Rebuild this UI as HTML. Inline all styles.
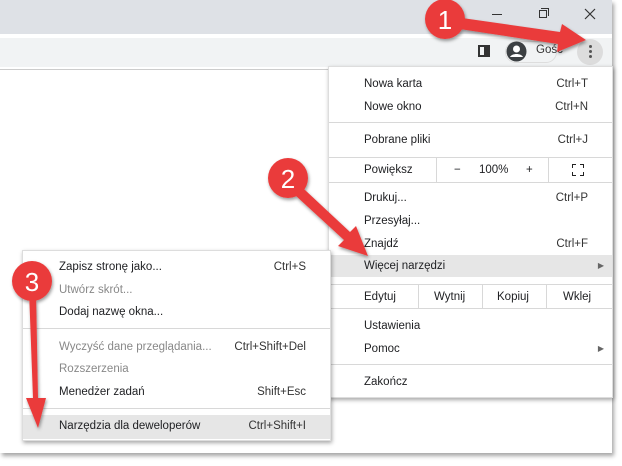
<!DOCTYPE html>
<html><head><meta charset="utf-8"><style>
*{margin:0;padding:0;box-sizing:border-box}
body{width:622px;height:466px;background:#fff;position:relative;overflow:hidden;font-family:"Liberation Sans",sans-serif;font-size:11.5px;color:#202124}
.abs{position:absolute}
.menu{position:absolute;background:#fff;box-shadow:1px 2px 4px rgba(0,0,0,.35);border:1px solid #ddd}
.it{position:absolute;left:0;right:0;height:22px;line-height:22px}
.it .l{position:absolute}
.it .r{position:absolute;color:#333}
.dis{color:#888}
.sep{position:absolute;left:0;right:0;height:1px;background:#d8d8d8}
.hl{background:#e6e6e6}
</style></head><body>
<div class="abs" style="left:0;top:0;width:612px;height:453px;box-shadow:2px 3px 4px rgba(0,0,0,.35);background:#fff"></div>
<div class="abs" style="left:0;top:0;width:612px;height:34px;background:#dee1e6"></div>
<div class="abs" style="left:0;top:38px;width:612px;height:29px;background:#f1f3f4"></div>
<div class="abs" style="left:0;top:69px;width:328px;height:1px;background:#ccc"></div>
<div class="abs" style="left:492px;top:14px;width:10px;height:1px;background:#333"></div>
<div class="abs" style="left:539px;top:10px;width:8px;height:8px;border:1px solid #333"></div>
<div class="abs" style="left:541px;top:8px;width:8px;height:8px;border-top:1px solid #333;border-right:1px solid #333"></div>
<svg class="abs" style="left:584px;top:8px" width="12" height="12"><path d="M1 1L11 11M11 1L1 11" stroke="#333" stroke-width="1.2"/></svg>
<div class="abs" style="left:478px;top:45px;width:12px;height:12px;border:2px solid #333;border-right-width:6px"></div>
<div class="abs" style="left:505px;top:41px;width:52px;height:22px;border-radius:11px;border:1px solid #ddd;background:#f1f3f4"></div>
<svg class="abs" style="left:506px;top:41px" width="21" height="21"><circle cx="10.5" cy="10.5" r="10" fill="#3c4043"/><circle cx="10.5" cy="8" r="3.5" fill="#fff"/><path d="M4 16c2-4 11-4 13 0" fill="#fff"/></svg>
<div class="abs" style="left:536px;top:44px;color:#333">Gość</div>
<div class="abs" style="left:577px;top:39px;width:26px;height:26px;border-radius:13px;background:#dcdcdc"></div>
<div class="abs" style="left:589px;top:45px;width:3px;height:3px;border-radius:2px;background:#555;box-shadow:0 5px 0 #555,0 10px 0 #555"></div>
<div class="menu" style="left:328px;top:66px;width:285px;height:332px">
 <div class="it" style="top:6px"><span class="l" style="left:35px">Nowa karta</span><span class="r" style="right:24px">Ctrl+T</span></div>
 <div class="it" style="top:29px"><span class="l" style="left:35px">Nowe okno</span><span class="r" style="right:24px">Ctrl+N</span></div>
 <div class="sep" style="top:55px"></div>
 <div class="it" style="top:62px"><span class="l" style="left:35px">Pobrane pliki</span><span class="r" style="right:24px">Ctrl+J</span></div>
 <div class="sep" style="top:90px"></div>
 <div class="it" style="top:92px"><span class="l" style="left:35px">Powiększ</span><span class="l" style="left:125px">−</span><span class="l" style="left:150px">100%</span><span class="l" style="left:197px">+</span></div>
 <div class="abs" style="left:107px;top:90px;width:1px;height:25px;background:#d8d8d8"></div>
 <div class="abs" style="left:219px;top:90px;width:1px;height:25px;background:#d8d8d8"></div>
 <svg class="abs" style="left:243px;top:97px" width="12" height="12"><path d="M0 4V0H4M8 0H12V4M12 8V12H8M4 12H0V8" fill="none" stroke="#222" stroke-width="2"/></svg>
 <div class="sep" style="top:115px"></div>
 <div class="it" style="top:120px"><span class="l" style="left:35px">Drukuj...</span><span class="r" style="right:24px">Ctrl+P</span></div>
 <div class="it" style="top:143px"><span class="l" style="left:35px">Przesyłaj...</span></div>
 <div class="it" style="top:166px"><span class="l" style="left:35px">Znajdź</span><span class="r" style="right:24px">Ctrl+F</span></div>
 <div class="it hl" style="top:188px"><span class="l" style="left:35px">Więcej narzędzi</span><span class="r" style="right:8px;font-size:8px;color:#666">▶</span></div>
 <div class="sep" style="top:217px"></div>
 <div class="it" style="top:219px"><span class="l" style="left:35px">Edytuj</span><span class="l" style="left:105px">Wytnij</span><span class="l" style="left:168px">Kopiuj</span><span class="l" style="left:234px">Wklej</span></div>
 <div class="abs" style="left:89px;top:217px;width:1px;height:24px;background:#d8d8d8"></div>
 <div class="abs" style="left:153px;top:217px;width:1px;height:24px;background:#d8d8d8"></div>
 <div class="abs" style="left:217px;top:217px;width:1px;height:24px;background:#d8d8d8"></div>
 <div class="sep" style="top:241px"></div>
 <div class="it" style="top:248px"><span class="l" style="left:35px">Ustawienia</span></div>
 <div class="it" style="top:271px"><span class="l" style="left:35px">Pomoc</span><span class="r" style="right:8px;font-size:8px;color:#666">▶</span></div>
 <div class="sep" style="top:297px"></div>
 <div class="it" style="top:304px"><span class="l" style="left:35px">Zakończ</span></div>
</div>
<div class="menu" style="left:22px;top:250px;width:309px;height:191px">
 <div class="it" style="top:5px"><span class="l" style="left:36px">Zapisz stronę jako...</span><span class="r" style="right:24px">Ctrl+S</span></div>
 <div class="it dis" style="top:28px"><span class="l" style="left:36px">Utwórz skrót...</span></div>
 <div class="it" style="top:50px"><span class="l" style="left:36px">Dodaj nazwę okna...</span></div>
 <div class="sep" style="top:77px"></div>
 <div class="it dis" style="top:85px"><span class="l" style="left:36px">Wyczyść dane przeglądania...</span><span class="r" style="right:24px">Ctrl+Shift+Del</span></div>
 <div class="it dis" style="top:107px"><span class="l" style="left:36px">Rozszerzenia</span></div>
 <div class="it" style="top:130px"><span class="l" style="left:36px">Menedżer zadań</span><span class="r" style="right:24px">Shift+Esc</span></div>
 <div class="sep" style="top:157px"></div>
 <div class="it hl" style="top:164px;height:24px"><span class="l" style="left:36px">Narzędzia dla deweloperów</span><span class="r" style="right:24px">Ctrl+Shift+I</span></div>
</div>
<svg class="abs" style="left:0;top:0" width="622" height="466">
 <defs><filter id="s"><feDropShadow dx="1" dy="2" stdDeviation="1.5" flood-opacity=".4"/></filter></defs>
 <g filter="url(#s)" fill="#ea3b3b">
  <path d="M455 17L560 32L562 24L586 40L557 52L558 44L453 28Z"/>
  <path d="M290 176L350 232L356 226L368 256L338 246L344 240L283 184Z"/>
  <path d="M29 290L36 290L38 398L46 398L38 428L26 398L33 398Z"/>
  <circle cx="445" cy="19" r="20"/>
  <circle cx="288" cy="178" r="20"/>
  <circle cx="32" cy="281" r="20"/>
 </g>
 <g fill="#fff" font-family="Liberation Sans,sans-serif" font-size="26" text-anchor="middle">
  <text x="445" y="29">1</text><text x="288" y="188">2</text><text x="32" y="291">3</text>
 </g>
</svg>
</body></html>
